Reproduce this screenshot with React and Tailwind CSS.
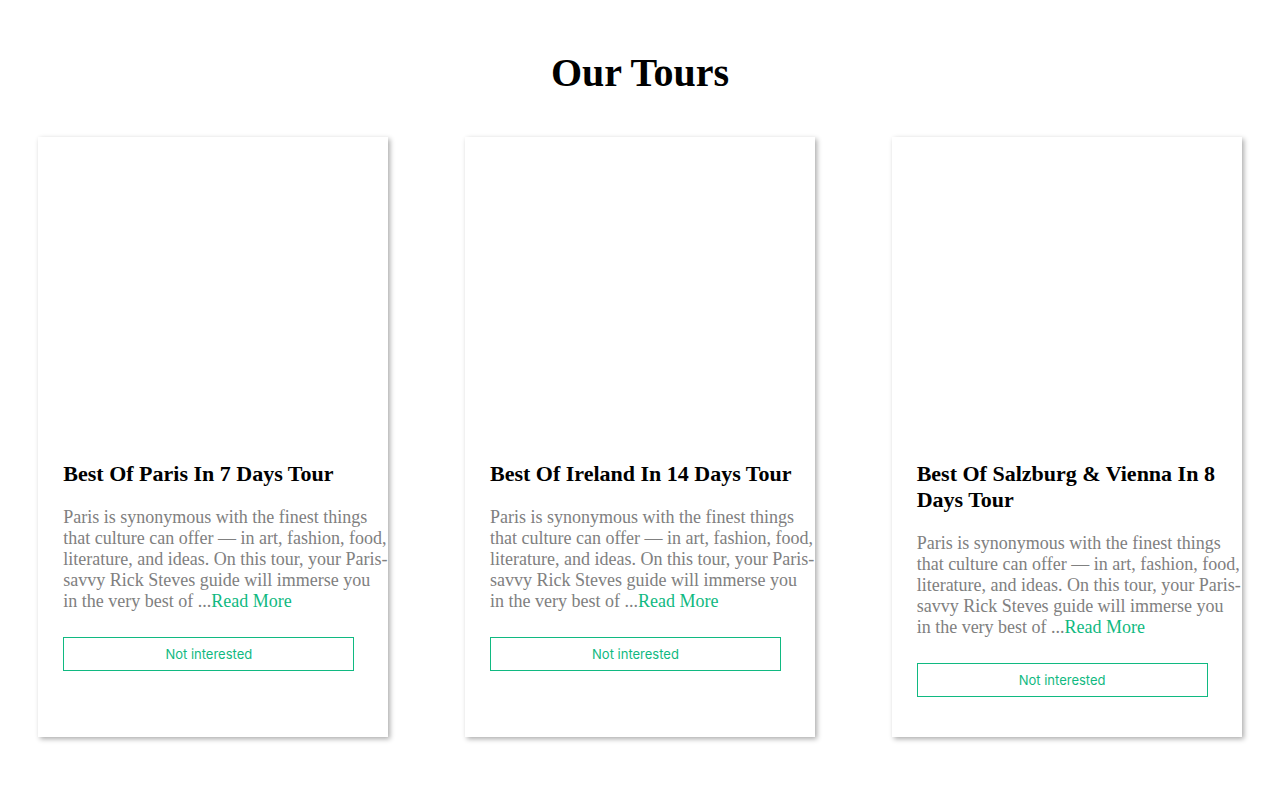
import React from "react";

const tours = [
  { id: 1, title: "Best Of Paris In 7 Days Tour" },
  { id: 2, title: "Best Of Ireland In 14 Days Tour" },
  { id: 3, title: "Best Of Salzburg & Vienna In 8 Days Tour" },
];

const blurb =
  "Paris is synonymous with the finest things that culture can offer — in art, fashion, food, literature, and ideas. On this tour, your Paris-savvy Rick Steves guide will immerse you in the very best of ...";

function TourCard({ title }) {
  return (
    <div className="w-[350px] h-[600px] bg-white shadow-[2px_2px_5px_rgba(0,0,0,0.33)]">
      {/* image area (empty) */}
      <div className="h-[300px]" />
      <div className="pl-[25px] pt-[24px]">
        <h2 className="text-[22px] leading-[26px] font-bold text-black pr-[20px]">{title}</h2>
        <p className="mt-[20px] text-[18px] leading-[21px] text-[#808080]">
          {blurb}
          <span className="text-[#10b981] cursor-pointer">Read More</span>
        </p>
        <button
          type="button"
          className="mt-[25px] w-[291px] h-[34px] pt-px border border-[#10b981] text-[#10b981] text-[13px] bg-white"
          style={{ fontFamily: "Inter, 'Liberation Sans', sans-serif" }}
        >
          Not interested
        </button>
      </div>
    </div>
  );
}

export default function App() {
  return (
    <div
      className="min-h-screen bg-white pt-[50px]"
      style={{ fontFamily: "'Liberation Serif', 'Times New Roman', serif" }}
    >
      <h1 className="text-center text-[40px] leading-[46px] font-bold text-black">Our Tours</h1>
      <div className="mt-[41px] flex justify-around">
        {tours.map((t) => (
          <TourCard key={t.id} title={t.title} />
        ))}
      </div>
    </div>
  );
}
